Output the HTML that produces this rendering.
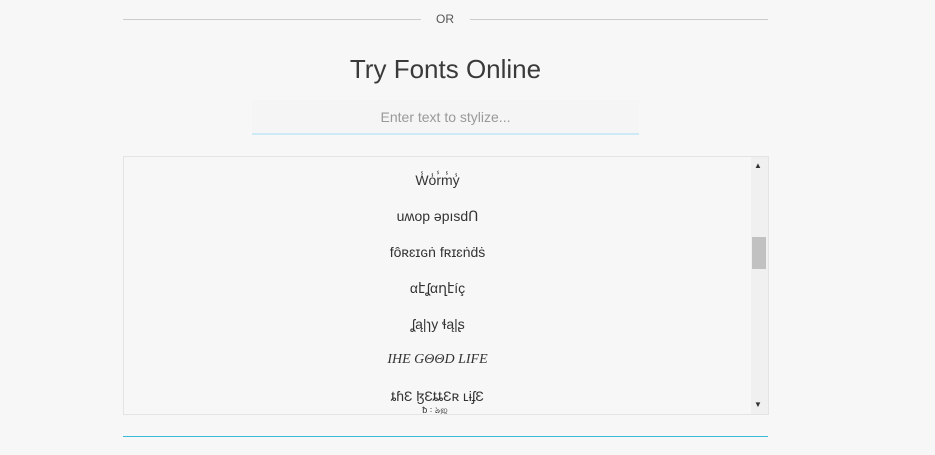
<!DOCTYPE html>
<html><head><meta charset="utf-8"><style>
body{margin:0;background:#f7f7f7;width:935px;height:455px;overflow:hidden;font-family:"Liberation Sans","DejaVu Sans",sans-serif;position:relative;color:#333}
.l{position:absolute;top:19px;height:1px;background:#ccc}
.or{position:absolute;top:12px;left:425px;width:40px;text-align:center;font-size:12px;color:#555}
h1{position:absolute;top:54px;left:0;width:891px;text-align:center;margin:0;font-weight:normal;font-size:26px;color:#3a3a3a}
.inp{position:absolute;left:252px;top:100px;width:387px;height:33px;background:#f5f5f5;border-bottom:2px solid #cfeaf7;text-align:center;line-height:34px;font-size:14px;color:#999}
.box{position:absolute;left:123px;top:156px;width:644px;height:257px;border:1px solid #e4e4e4;background:#f7f7f7;overflow:hidden}
.sb{position:absolute;right:0;top:0;width:17px;height:257px;background:#f0f0f0}
.th{position:absolute;left:1px;top:80px;width:14px;height:32px;background:#c1c1c1}
.it{position:absolute;left:0;width:627px;text-align:center;font-size:14px;color:#333}
.bl{position:absolute;left:123px;top:436px;width:645px;height:1px;background:#3bbad8}
</style></head><body>
<div class="l" style="left:123px;width:298px"></div><div class="or">OR</div><div class="l" style="left:470px;width:298px"></div>
<h1>Try Fonts Online</h1>
<div class="inp">Enter text to stylize...</div>
<div class="box">
<div class="it" style="top:15px">W̾o̾r̾m̾y̾</div>
<div class="it" style="top:51px">uʍop ǝpısdՈ</div>
<div class="it" style="top:87px">fôʀɛɪɢṅ fʀɪɛṅḋṡ</div>
<div class="it" style="top:123px">αէʆαղէíç</div>
<div class="it" style="top:159px">ʆą|ɿy ɬą|ʂ</div>
<div class="it" style="top:195px;font-style:italic;font-family:'Liberation Serif',serif">IHE GΘΘD LIFE</div>
<div class="it" style="top:231px">ȶɦƐ ɮƐȶȶƐʀ ʟɨʄƐ</div>
<div class="it" style="top:246px;font-size:9px">ƀ ꞉ ঌஜ_</div>
<div class="sb"><div style="position:absolute;left:3px;top:4px;font-size:8px">▲</div><div class="th"></div><div style="position:absolute;left:3px;top:243px;font-size:8px">▼</div></div>
</div>
<div class="bl"></div>
</body></html>
